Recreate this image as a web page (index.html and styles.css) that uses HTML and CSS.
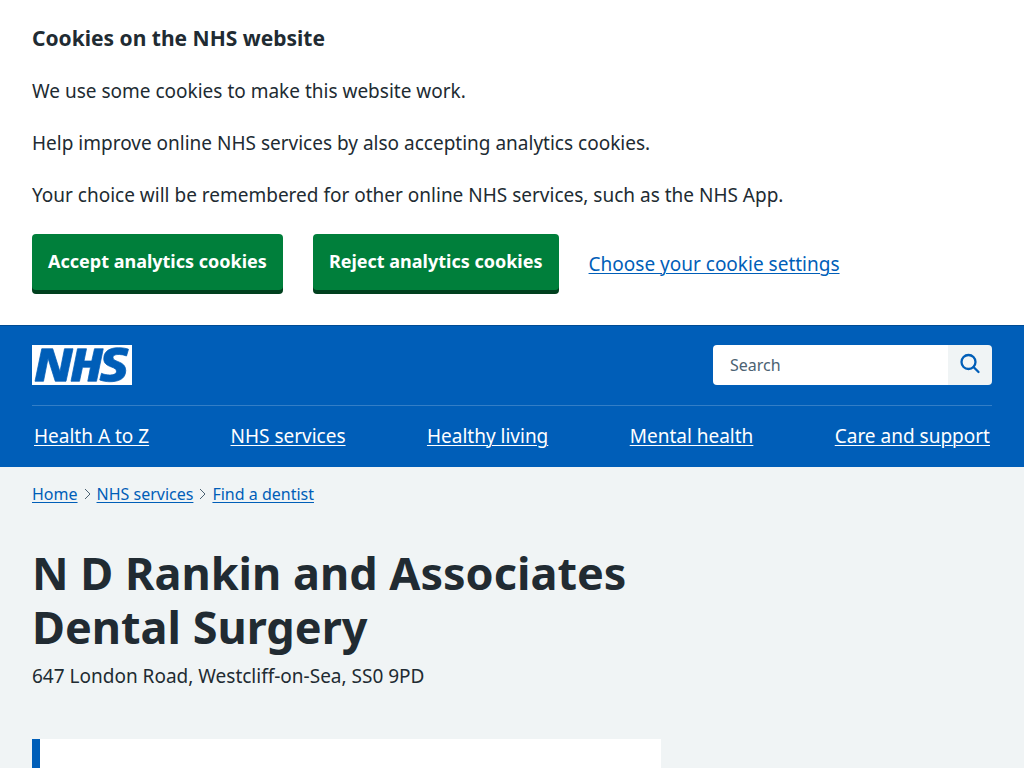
FILE: index.html
```html
<!DOCTYPE html>
<html lang="en">
<head>
<meta charset="utf-8">
<meta name="viewport" content="width=device-width, initial-scale=1">
<title>N D Rankin and Associates Dental Surgery - NHS</title>
<link rel="stylesheet" href="styles.css">
</head>
<body>
<section class="cookies" aria-label="Cookies">
  <h2 class="cookies-title">Cookies on the NHS website</h2>
  <p>We use some cookies to make this website work.</p>
  <p>Help improve online NHS services by also accepting analytics cookies.</p>
  <p>Your choice will be remembered for other online NHS services, such as the NHS App.</p>
  <div class="cookies-actions">
    <button class="button" type="button">Accept analytics cookies</button>
    <button class="button" type="button">Reject analytics cookies</button>
    <a class="cookies-link" href="#settings">Choose your cookie settings</a>
  </div>
</section>
<header class="header">
  <div class="header-top">
    <a class="logo-link" href="#home" aria-label="NHS homepage">
      <svg class="logo" viewBox="0 0 200 80" width="100" height="40" aria-hidden="true">
        <path fill="#fff" d="M0 0h200v80H0z"/>
        <path fill="#005eb8" stroke="#005eb8" stroke-width="1.500" d="M172.500 5.500c-14.500 0-29 5-29 22 0 10.200 7.700 13.500 14.700 16.300l.7.3c5.400 2 10.100 3.900 10.100 8.400 0 6.500-8.500 7.500-14 7.500s-12.500-1.500-16-3.500L135.500 70c5.500 2 13.500 3.500 20 3.500 15.500 0 32-4.500 32-22.500 0-19.500-25.500-16.500-25.500-25.500 0-5.500 5.500-6.500 12.500-6.500a35 35 0 0 1 14.500 3l4-13.500c-4.500-2-12-3-20.500-3Zm-131 2h-22L6 72.500h17L32 27h.2l14.300 45.500h21.500l14-65h-17l-9 45.500h-.2L41.500 7.500Zm67.500 0h-18l-13 65h17l6-28H117l-5.500 28H129l13.500-65H125L119.500 32h-15.500L109 7.500Z"/>
      </svg>
    </a>
    <form class="search" role="search">
      <input class="search-input" type="search" aria-label="Search the NHS website" placeholder="Search">
      <button class="search-button" type="submit" aria-label="Search">
        <svg viewBox="0 0 24 24" width="24" height="24" fill="none" stroke="#005eb8" stroke-width="2.300" stroke-linecap="round" aria-hidden="true"><circle cx="10.500" cy="9" r="7"/><path d="m15.500 14 5 5"/></svg>
      </button>
    </form>
  </div>
  <nav class="nav" aria-label="Primary">
    <a href="#health">Health A to Z</a>
    <a href="#services">NHS services</a>
    <a href="#living">Healthy living</a>
    <a href="#mental">Mental health</a>
    <a href="#care">Care and support</a>
  </nav>
</header>
<main class="main">
  <nav class="breadcrumb" aria-label="Breadcrumb">
    <a href="#home">Home</a>
    <svg viewBox="0 0 7 12" width="7" height="12" aria-hidden="true"><path d="m1 1 5 5-5 5"/></svg>
    <a href="#services">NHS services</a>
    <svg viewBox="0 0 7 12" width="7" height="12" aria-hidden="true"><path d="m1 1 5 5-5 5"/></svg>
    <a href="#dentist">Find a dentist</a>
  </nav>
  <div class="content">
    <h1>N D Rankin and Associates Dental Surgery</h1>
    <p class="address">647 London Road, Westcliff-on-Sea, SS0 9PD</p>
    <div class="inset"></div>
  </div>
</main>
</body>
</html>
```
FILE: styles.css
```css
* { box-sizing: border-box; }
body {
  display: flex;
  flex-direction: column;
  min-height: 100vh;
  margin: 0;
  background: #f0f4f5;
  color: #212b32;
  font: 19px/28px "Noto Sans", "Open Sans", sans-serif;
}
h1, h2, p { margin: 0; }
a { color: #005eb8; text-underline-offset: 2px; text-decoration-thickness: 1px; }
.cookies { background: #fff; padding: 24px 32px 31px; }
.cookies-title { font-size: 21px; line-height: 28px; margin-bottom: 25px; }
.cookies p { margin-bottom: 24px; }
.cookies-actions { display: flex; align-items: center; gap: 30px; padding-top: 1px; }
.button {
  height: 56px;
  margin-bottom: 4px;
  padding: 0 16px 2px;
  border: 0;
  border-radius: 4px;
  background: #007f3b;
  box-shadow: 0 4px 0 #00401e;
  color: #fff;
  font: bold 18px/28px "Noto Sans", sans-serif;
  white-space: nowrap;
  cursor: pointer;
}
.header {
  padding: 0 32px;
  background: #005eb8;
  box-shadow: inset 0 1px 0 #004b93;
}
.header-top {
  display: flex;
  align-items: center;
  justify-content: space-between;
  padding: 20px 0;
}
.logo-link, .logo { display: block; }
.search {
  display: flex;
  width: 279px;
  height: 40px;
  border-radius: 4px;
  overflow: hidden;
}
.search-input {
  flex: 1;
  min-width: 0;
  padding: 0 17px;
  border: 0;
  border-radius: 0;
  background: #fff;
  color: #212b32;
  font: 16px/24px "Noto Sans", sans-serif;
  appearance: none;
}
.search-input::placeholder { color: #4c6272; opacity: 1; }
.search-button {
  display: grid;
  place-items: center;
  width: 44px;
  padding: 0;
  border: 0;
  background: #f0f4f5;
  cursor: pointer;
}
.nav {
  display: flex;
  justify-content: space-between;
  padding: 16px 2px 17px;
  border-top: 1px solid #337ec6;
}
.nav a { color: #fff; }
.main {
  display: flex;
  flex: 1;
  flex-direction: column;
  padding: 15px 32px 0;
}
.breadcrumb {
  display: flex;
  align-items: center;
  gap: 6px;
  font-size: 16px;
  line-height: 24px;
}
.breadcrumb svg { fill: none; stroke: #4c6272; }
.content {
  display: flex;
  flex: 1;
  flex-direction: column;
  width: calc((100% + 32px) * 2 / 3 - 32px);
  padding-top: 40px;
}
h1 { font-size: 45px; line-height: 54px; }
.address { margin-top: 8px; }
.inset { flex: 1; margin-top: 49px; border-left: 8px solid #005eb8; background: #fff; }
```
